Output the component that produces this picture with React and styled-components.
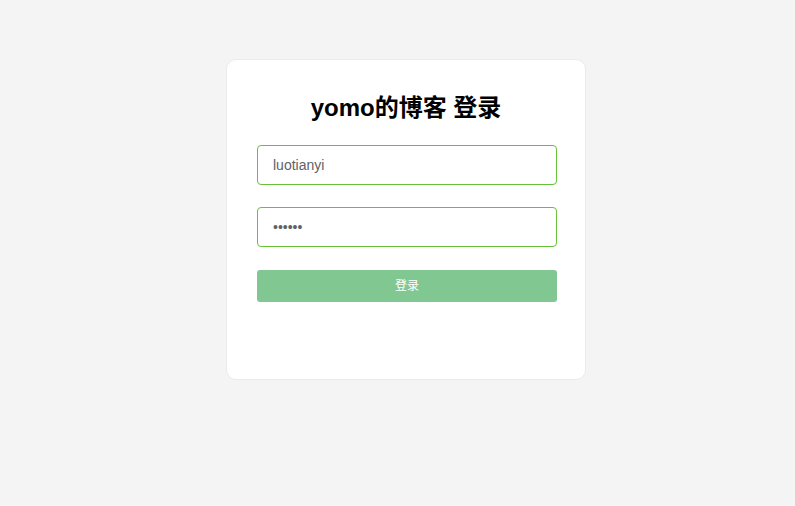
import React from "react";
import styled, { createGlobalStyle } from "styled-components";

const Global = createGlobalStyle`
  html, body { margin: 0; padding: 0; background: #f4f4f4; }
  body { font-family: "Liberation Sans", Arial, "Noto Sans CJK SC", sans-serif; }
`;

const Page = styled.div`
  width: 795px;
  height: 506px;
  display: flex;
  justify-content: center;
  align-items: flex-start;
  padding: 59px 0 0 17px;
  box-sizing: border-box;
`;

const Card = styled.form`
  width: 360px;
  height: 321px;
  box-sizing: border-box;
  padding: 30px 30px;
  background: #ffffff;
  border: 1px solid #ebebeb;
  border-radius: 10px;
  display: flex;
  flex-direction: column;
`;

const Title = styled.h2`
  margin: 0 0 20px;
  height: 35px;
  line-height: 35px;
  text-align: center;
  font-size: 24px;
  font-weight: bold;
  color: #000;
  font-family: "Liberation Sans", Arial, "Noto Sans CJK SC", sans-serif;
`;

const Field = styled.input`
  display: block;
  width: 300px;
  height: 40px;
  box-sizing: border-box;
  margin: 0 0 ${(p) => p.$gap}px;
  padding: 0 15px;
  border: 1px solid #67c23a;
  border-radius: 4px;
  background: #fff;
  color: #606266;
  font-size: 14px;
  font-family: "Liberation Sans", Arial, sans-serif;
  outline: none;
`;

const Submit = styled.button`
  width: 300px;
  height: 32px;
  border: none;
  border-radius: 3px;
  background: #80c792;
  color: #ffffff;
  font-size: 12px;
  line-height: 30px;
  font-family: "Noto Sans CJK SC", sans-serif;
  cursor: pointer;
  padding: 0 0 2px;
`;

export default function App() {
  return (
    <>
      <Global />
      <Page>
        <Card onSubmit={(e) => e.preventDefault()}>
          <Title>yomo的博客 登录</Title>
          <Field $gap={22} type="text" defaultValue="luotianyi" />
          <Field $gap={23} type="password" defaultValue="123456" />
          <Submit type="submit">登录</Submit>
        </Card>
      </Page>
    </>
  );
}
